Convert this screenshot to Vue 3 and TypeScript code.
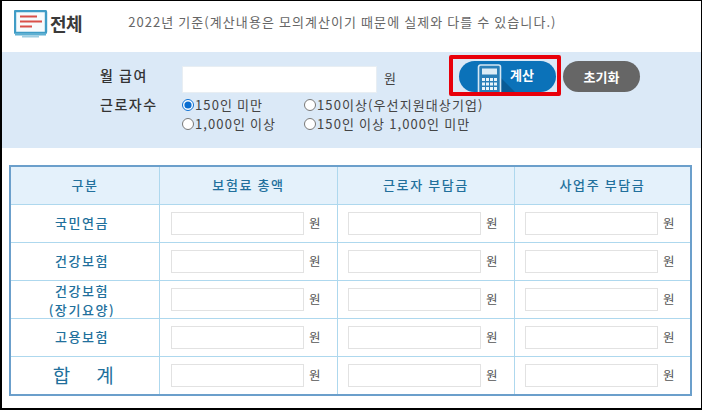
<script setup lang="ts">
const columns: string[] = ['보험료 총액', '근로자 부담금', '사업주 부담금']
const rows: { label: string[]; cls: string }[] = [
  { label: ['국민연금'], cls: '' },
  { label: ['건강보험'], cls: '' },
  { label: ['건강보험', '(장기요양)'], cls: 'two' },
  { label: ['고용보험'], cls: '' },
  { label: ['합　계'], cls: 'total' },
]
</script>

<template>
  <main class="frame">
    <header class="head">
      <svg class="logo" width="37" height="29" viewBox="0 0 37 29">
        <rect x="1" y="1" width="31" height="22" rx="1" fill="#f7fbfd" stroke="#3f9cc6" stroke-width="2.4" />
        <path d="M6 6.500h17M6 11.500h22M6 16.500h12" stroke="#d9504a" stroke-width="2" fill="none" />
        <rect x="1" y="23" width="31" height="2.500" fill="#5fb0d2" />
        <rect x="8" y="25.500" width="17" height="2" fill="#9ccde2" />
      </svg>
      <strong class="title">전체</strong>
      <p class="note">2022년 기준(계산내용은 모의계산이기 때문에 실제와 다를 수 있습니다.)</p>
    </header>

    <section class="panel">
      <div class="form">
        <div class="line">
          <label class="lbl raised">월 급여</label>
          <input class="salary" type="text" />
          <span class="unit">원</span>
        </div>
        <div class="line workers">
          <span class="lbl">근로자수</span>
          <div class="radios">
            <label class="radio"><input type="radio" name="n" checked />150인 미만</label>
            <label class="radio"><input type="radio" name="n" />150이상(우선지원대상기업)</label>
            <label class="radio"><input type="radio" name="n" />1,000인 이상</label>
            <label class="radio"><input type="radio" name="n" />150인 이상 1,000인 미만</label>
          </div>
        </div>
      </div>
      <div class="actions">
        <div class="highlight">
          <button class="btn calc" type="button">
            <svg class="calc-icon" width="25" height="30" viewBox="0 0 25 30">
              <path d="M24 14L40 30H24Z" fill="#0a5b96" />
              <path d="M1.500 30V3a2 2 0 0 1 2-2h18a2 2 0 0 1 2 2v27" fill="#2a7fb8" stroke="#d5e8f4" stroke-width="1.600" />
              <rect x="5" y="4.500" width="15" height="6" fill="#dcecf6" />
              <g fill="#eaf4fa">
                <rect x="5" y="14" width="3" height="3" /><rect x="9" y="14" width="3" height="3" /><rect x="13" y="14" width="3" height="3" /><rect x="17" y="14" width="3" height="3" />
                <rect x="5" y="18.500" width="3" height="3" /><rect x="9" y="18.500" width="3" height="3" /><rect x="13" y="18.500" width="3" height="3" /><rect x="17" y="18.500" width="3" height="3" />
                <rect x="5" y="23" width="3" height="3" /><rect x="9" y="23" width="3" height="3" /><rect x="13" y="23" width="3" height="3" /><rect x="17" y="23" width="3" height="3" />
              </g>
            </svg>
            <span>계산</span>
          </button>
        </div>
        <button class="btn reset" type="button">초기화</button>
      </div>
    </section>

    <section class="table">
      <div class="cell th">구분</div>
      <div v-for="c in columns" :key="c" class="cell th">{{ c }}</div>
      <template v-for="r in rows" :key="r.label[0] + r.cls">
        <div class="cell name" :class="r.cls">
          <span v-for="t in r.label" :key="t">{{ t }}</span>
        </div>
        <div v-for="c in columns" :key="c" class="cell val">
          <input type="text" />
          <span>원</span>
        </div>
      </template>
    </section>
  </main>
</template>

<style>
html, body { margin: 0; background: #fff; }
</style>

<style scoped>
.frame {
  box-sizing: border-box;
  width: 702px;
  height: 410px;
  border: solid #000;
  border-width: 1px 1px 2px 2px;
  margin: 0;
  font-family: "Noto Sans CJK KR", "Liberation Sans", sans-serif;
  overflow: hidden;
  background: #fff;
}
.head {
  height: 51px;
  display: flex;
  align-items: center;
  padding-left: 12px;
  box-sizing: border-box;
}
.logo { flex: none; margin-top: -5px; }
.title { font-size: 18px; color: #3a3a3a; margin: -7px 0 0 -1px; letter-spacing: -0.5px; line-height: 22px; }
.note {
  margin: -9px 0 0 46px;
  font-size: 13px;
  color: #666;
  line-height: 18px;
  letter-spacing: 1.07px;
  white-space: nowrap;
}
.panel {
  height: 96px;
  background: #dbe9f7;
  display: flex;
  position: relative;
}
.form { width: 447px; padding: 14px 0 0 98px; box-sizing: border-box; flex: none; }
.line { display: flex; align-items: center; }
.lbl {
  width: 82px;
  font-size: 14px;
  font-weight: 500;
  color: #333;
  line-height: 18px;
  flex: none;
  letter-spacing: 1.5px;
  white-space: nowrap;
}
.raised { padding-bottom: 9px; }
.salary {
  width: 195px;
  height: 27px;
  box-sizing: border-box;
  border: 1px solid #e8eef3;
  background: #fff;
  padding: 0;
  margin: 0;
}
.unit { font-size: 13px; color: #444; margin-left: 7px; padding-bottom: 5px; }
.workers { align-items: flex-start; margin-top: 2px; }
.radios {
  display: grid;
  grid-template-columns: 122px auto;
  grid-auto-rows: 19px;
}
.radio {
  display: flex;
  align-items: center;
  font-size: 13px;
  color: #444;
  white-space: nowrap;
  letter-spacing: 1.1px;
  line-height: 19px;
}
.radio input {
  width: 12px;
  height: 12px;
  margin: 0 1px 0 0;
  accent-color: #0a6ed1;
}
.actions { display: flex; align-items: flex-start; padding-top: 3px; }
.highlight {
  box-sizing: border-box;
  width: 112px;
  height: 41px;
  border: 4px solid #e8000b;
  border-radius: 2px;
  padding: 2px 0 0 6px;
}
.btn {
  border: 0;
  padding: 0;
  font-family: inherit;
  font-weight: 700;
  font-size: 13px;
  color: #fff;
  height: 31px;
  border-radius: 16px;
  display: flex;
  align-items: center;
  justify-content: center;
  cursor: pointer;
}
.calc {
  width: 97px;
  background: #0b72b9;
  justify-content: flex-start;
  overflow: hidden;
  position: relative;
}
.calc-icon { margin: 5px 0 0 18px; flex: none; overflow: visible; }
.calc span { margin: -5px 0 0 8px; position: relative; }
.reset {
  width: 77px;
  background: #666;
  margin: 6px 0 0 2px;
}
.table {
  box-sizing: border-box;
  width: 683px;
  margin: 17px 0 0 7px;
  border: 2px solid #6b9fcb;
  display: grid;
  grid-template-columns: 149px 178px 177px 175px;
  grid-template-rows: 38px 38px 38px 38px 38px 37px;
  height: 231px;
}
.cell {
  box-sizing: border-box;
  border-right: 1.5px solid #aed8ee;
  border-bottom: 1.5px solid #aed8ee;
  display: flex;
  align-items: center;
}
.cell:nth-child(4n) { border-right: 0; }
.cell:nth-last-child(-n+4) { border-bottom: 0; }
.th {
  background: #e4f1fb;
  justify-content: center;
  font-size: 13px;
  font-weight: 500;
  color: #22709c;
  letter-spacing: 1.6px;
  padding-bottom: 3px;
}
.name {
  flex-direction: column;
  justify-content: center;
  font-size: 13px;
  font-weight: 500;
  color: #22709c;
  letter-spacing: 1.6px;
  padding-right: 6px;
  padding-bottom: 2px;
}
.name.two { line-height: 19px; padding-bottom: 0; }
.name.total { font-size: 19px; font-weight: 400; letter-spacing: 3.500px; padding-right: 0; }
.val { padding-left: 11px; }
.val:nth-child(4n+3), .val:nth-child(4n) { padding-left: 10px; }
.val input {
  box-sizing: border-box;
  width: 133px;
  height: 23px;
  border: 1px solid #e2e2e2;
  background: #fff;
  padding: 0;
  margin: 0;
  flex: none;
}
.val span { font-size: 12.5px; color: #555; margin-left: 5px; padding-bottom: 3px; }
</style>
